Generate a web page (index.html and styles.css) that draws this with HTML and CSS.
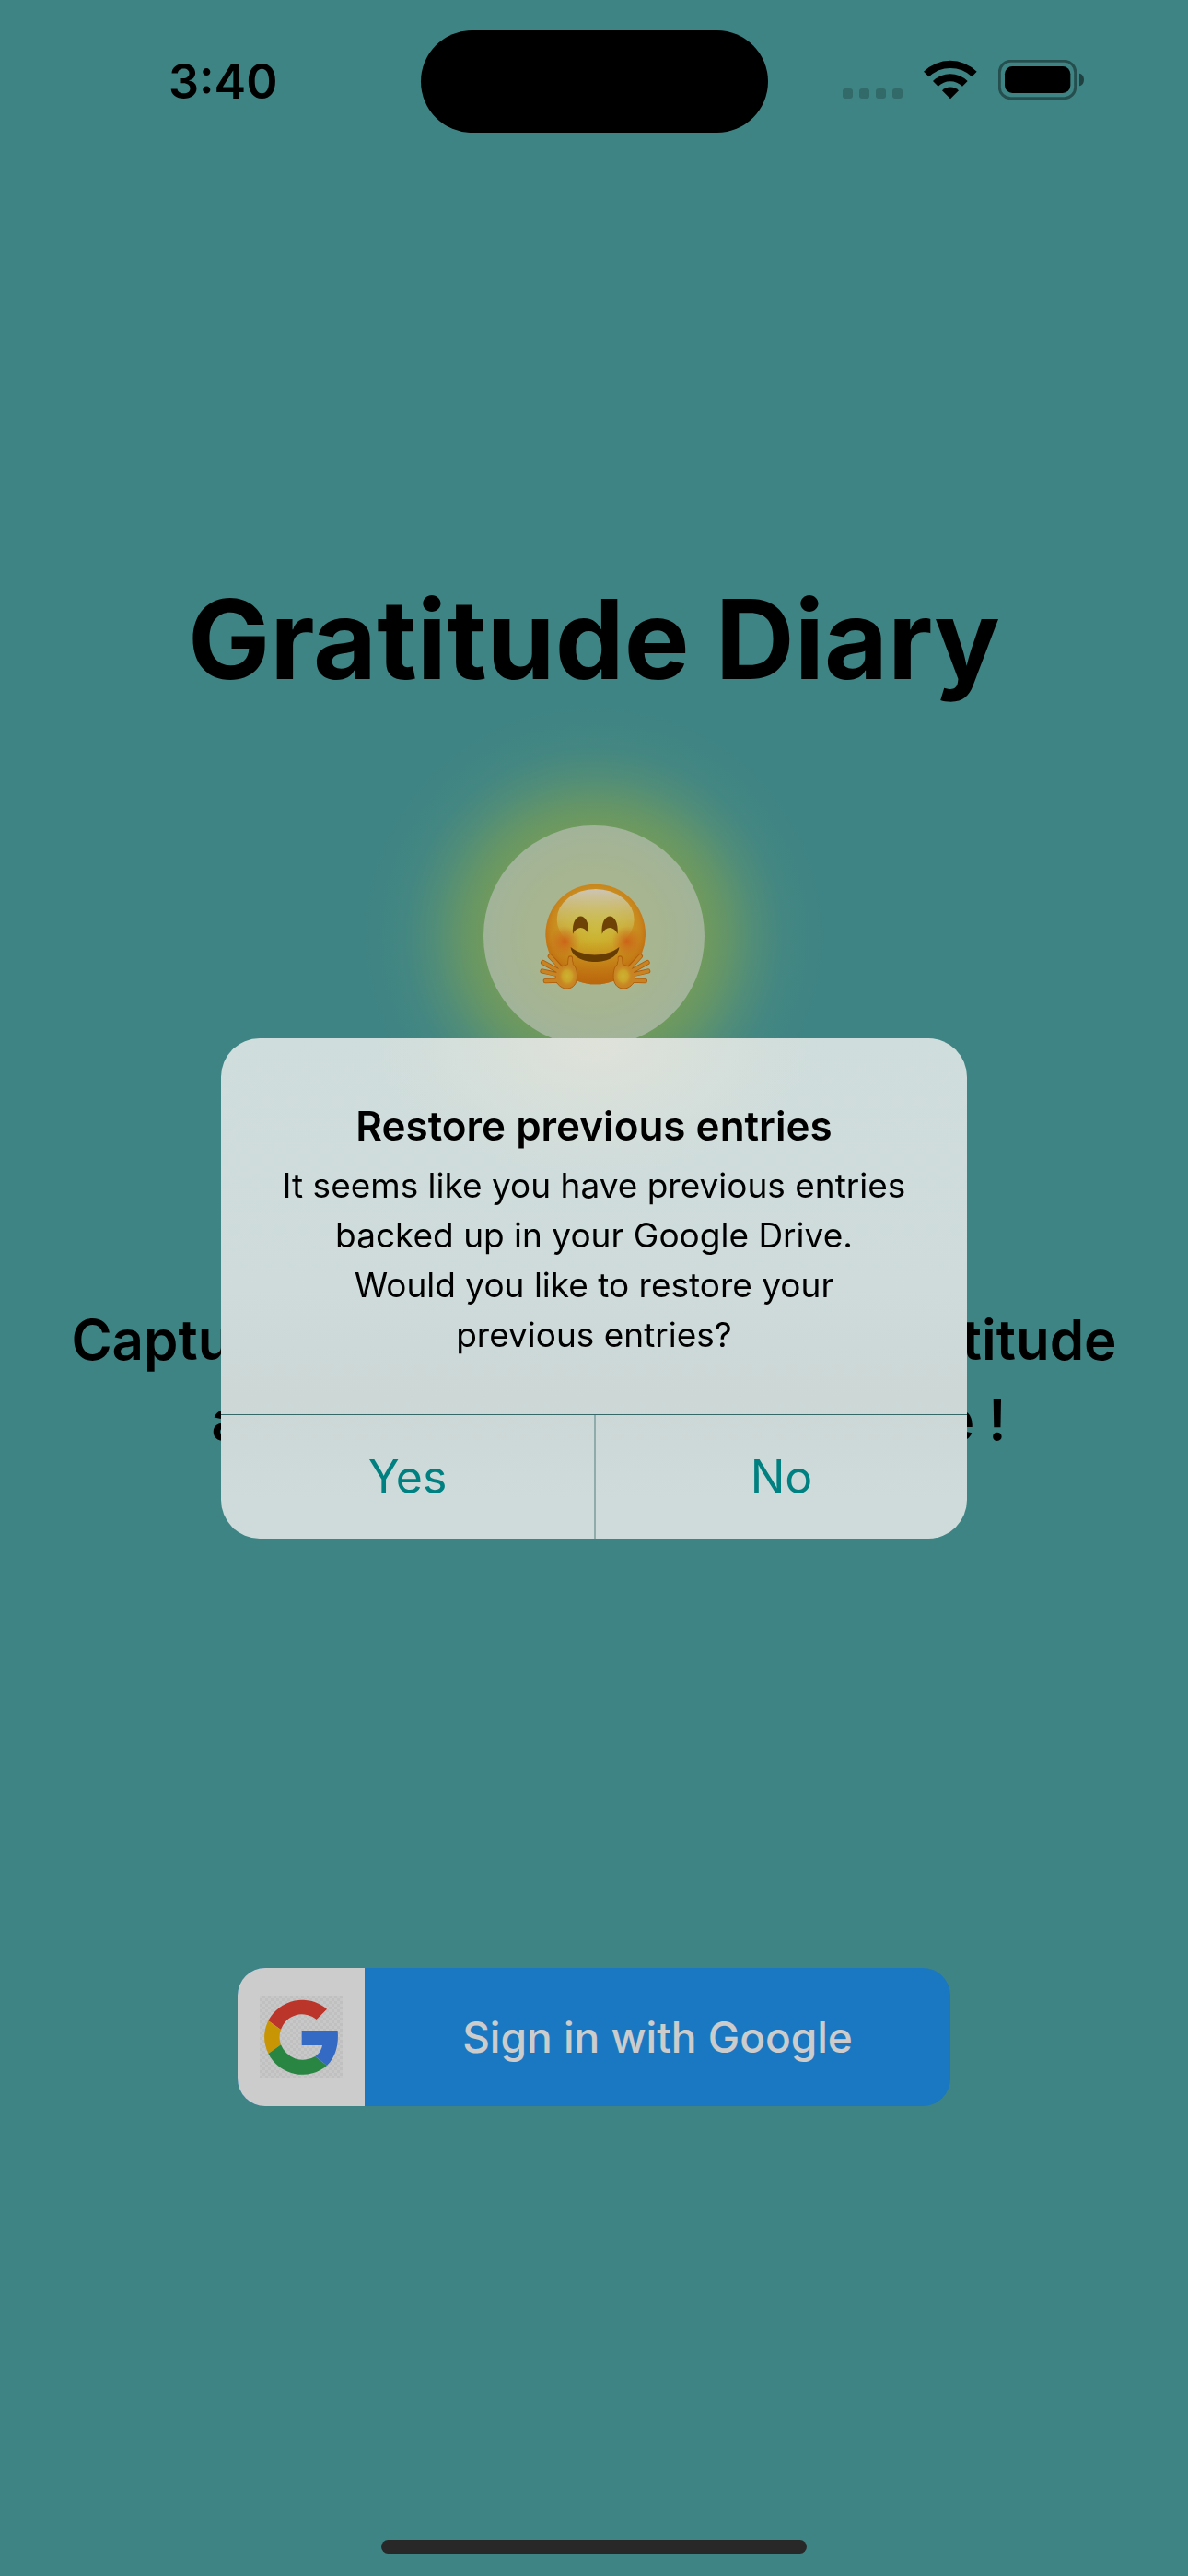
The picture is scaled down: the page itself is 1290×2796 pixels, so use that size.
FILE: index.html
```html
<!DOCTYPE html>
<html lang="en">
<head>
<meta charset="utf-8">
<meta name="viewport" content="width=device-width, initial-scale=1">
<title>Gratitude Diary</title>
<link rel="stylesheet" href="styles.css">
</head>
<body>
<div class="screen">
  <header class="status">
    <time class="status-time">3:40</time>
    <div class="island"></div>
    <div class="status-icons">
      <svg class="signal" width="65" height="11" viewBox="0 0 65 11" aria-label="No signal" fill="#000" fill-opacity=".2">
        <rect width="11" height="11" rx="3"/><rect x="18" width="11" height="11" rx="3"/><rect x="36" width="11" height="11" rx="3"/><rect x="54" width="11" height="11" rx="3"/>
      </svg>
      <svg width="58" height="43" viewBox="371 75 174 129" aria-label="Wi-Fi">
        <path d="M371 113A123 123 0 0 1 544 113L528 130A101 101 0 0 0 388 130Z"/>
        <path d="M401 144A80 80 0 0 1 514 144L497 161A56 56 0 0 0 418 161Z"/>
        <path d="M431 175A38 38 0 0 1 485 175L458 202Z"/>
      </svg>
      <svg width="93" height="43" viewBox="612 75 279 129" aria-label="Battery full">
        <rect x="616" y="79" width="247" height="121" rx="36" fill="none" stroke="#000" stroke-opacity=".4" stroke-width="9"/>
        <rect x="633" y="96" width="214" height="87" rx="25"/>
        <path d="M876 119C896 122 896 157 876 160Z" fill-opacity=".5"/>
      </svg>
    </div>
  </header>

  <main class="welcome">
    <h1 class="title">Gratitude Diary</h1>
    <div class="badge">
      <svg class="hug" viewBox="105 78 360 360" role="img" aria-label="Hugging face">
        <defs>
          <radialGradient id="face" cx=".5" cy=".45" r=".56">
            <stop offset="0" stop-color="#ffe63c"/><stop offset=".45" stop-color="#ffcf30"/>
            <stop offset=".8" stop-color="#fba824"/><stop offset="1" stop-color="#ef7c10"/>
          </radialGradient>
          <linearGradient id="low" x1="0" y1="0" x2="0" y2="1">
            <stop offset=".55" stop-color="#f49a18" stop-opacity="0"/><stop offset="1" stop-color="#ea8210"/>
          </linearGradient>
          <linearGradient id="shine" x1="0" y1="0" x2="0" y2="1">
            <stop offset="0" stop-color="#fff6e4"/><stop offset=".5" stop-color="#fff27a" stop-opacity=".7"/><stop offset="1" stop-color="#ffe23a" stop-opacity="0"/>
          </linearGradient>
          <radialGradient id="blush">
            <stop offset="0" stop-color="#ff6c1c" stop-opacity=".8"/><stop offset="1" stop-color="#ff7c20" stop-opacity="0"/>
          </radialGradient>
          <radialGradient id="palm">
            <stop offset="0" stop-color="#ffe03e"/><stop offset=".5" stop-color="#ffcc34"/><stop offset="1" stop-color="#fba42c" stop-opacity="0"/>
          </radialGradient>
          <g id="hand">
            <path d="M142 324L178 362M119 344L172 373M117 372L172 384M127 404L172 402M208 330L204 374" fill="none" stroke="#dd760c" stroke-width="16" stroke-linecap="round"/>
            <path d="M200 350C205 330 218 335 217 350C229 361 231 380 229 398C226 420 211 430 194 429C177 428 166 414 158 402L163 368L178 358Z" fill="#fba42c" stroke="#d97810" stroke-width="3"/>
            <path d="M142 324L182 369M119 344L177 376M117 372L177 387M127 404L177 402M208 331L204 378" fill="none" stroke="#fba42c" stroke-width="11" stroke-linecap="round"/>
            <ellipse cx="198" cy="388" rx="32" ry="38" fill="url(#palm)"/>
          </g>
        </defs>
        <circle cx="290" cy="252" r="163" fill="url(#face)"/>
        <circle cx="290" cy="252" r="163" fill="url(#low)"/>
        <ellipse cx="290" cy="204" rx="126" ry="99" fill="url(#shine)"/>
        <circle cx="190" cy="275" r="50" fill="url(#blush)"/>
        <circle cx="392" cy="275" r="50" fill="url(#blush)"/>
        <path id="eye" d="M216 251C210 174 273 174 267 251C255 224 228 224 216 251Z" fill="#8a5208"/>
        <use href="#eye" x="95"/>
        <path d="M209 294C250 328 325 328 367 294C362 358 215 358 209 294Z" fill="#804c04"/>
        <use href="#hand"/>
        <use href="#hand" transform="matrix(-1 0 0 1 578 0)"/>
      </svg>
    </div>
    <div class="tagline">
      <p class="tagline-row"><span>Captu</span><span>titude</span></p>
      <p class="tagline-row tagline-row-short"><span>a</span><span>e !</span></p>
    </div>
    <button class="google" type="button">
      <span class="google-mark">
        <svg class="google-logo" viewBox="96 108 270 270" aria-hidden="true">
          <path d="M124 190A124 124 0 0 1 315 152L281 186A73 73 0 0 0 165 219Z" fill="#ea4335"/>
          <path d="M124 190A124 124 0 0 0 124 297L165 268A73 73 0 0 1 165 219Z" fill="#fbbc05"/>
          <path d="M124 297A124 124 0 0 0 315 336L277 306A77 77 0 0 1 165 268Z" fill="#34a853"/>
          <path d="M233 222H350C354 265 345 307 315 336L277 306Q297 292 300 270H233Z" fill="#4285f4"/>
        </svg>
      </span>
      <span class="google-label">Sign in with Google</span>
    </button>
  </main>
  <div class="home-bar"></div>
</div>

<div class="scrim">
  <section class="alert" role="alertdialog" aria-modal="true" aria-labelledby="alert-title" aria-describedby="alert-text">
    <div class="alert-body">
      <h2 class="alert-title" id="alert-title">Restore previous entries</h2>
      <p class="alert-text" id="alert-text">It seems like you have previous entries<br>backed up in your Google Drive.<br>Would you like to restore your<br>previous entries?</p>
    </div>
    <div class="alert-actions">
      <button class="alert-button" type="button">Yes</button>
      <button class="alert-button" type="button">No</button>
    </div>
  </section>
</div>
</body>
</html>
```
FILE: styles.css
```css
* { box-sizing: border-box; }

body {
  margin: 0;
  background: #4fa6a5;
  color: #000;
  font-family: Inter, "Liberation Sans", sans-serif;
}

h1, h2, p { margin: 0; }

button {
  border: 0;
  padding: 0;
  font-family: inherit;
  cursor: pointer;
}

.screen {
  min-height: 100vh;
  display: flex;
  flex-direction: column;
  padding: 33px 0 24px;
}

/* Status bar */
.status {
  display: grid;
  grid-template-columns: 1fr auto 1fr;
  align-items: center;
  justify-items: center;
  padding: 0 28px;
}

.status-time {
  font-size: 52px;
  line-height: 64px;
  font-weight: 600;
}

.island {
  width: 377px;
  height: 111px;
  border-radius: 56px;
  background: #000;
}

.status-icons {
  display: flex;
  align-items: flex-end;
  gap: 23px;
  padding: 0 4px 4px 0;
}

.signal { margin-bottom: 1px; }

/* Welcome page */
.welcome {
  flex: 1;
  display: flex;
  flex-direction: column;
  align-items: center;
  padding-top: 480px;
}

.title {
  font-size: 119px;
  line-height: 140px;
  font-weight: 700;
}

.badge {
  position: relative;
  z-index: 0;
  width: 240px;
  height: 240px;
  margin-top: 132px;
  display: grid;
  place-items: center;
}

/* Warm glow round the badge */
.badge::before {
  content: "";
  position: absolute;
  z-index: -2;
  inset: -130px;
  border-radius: 50%;
  background: radial-gradient(closest-side, #8bc176 48%, #7ebb82 57%, #66b196 69%, #55a9a3 82%, #4fa6a5);
}

.badge::after {
  content: "";
  position: absolute;
  z-index: -1;
  inset: 0;
  border-radius: 50%;
  background: radial-gradient(closest-side, #d1e3b4 60%, #cae0c0);
}

.hug {
  width: 120px;
  height: 120px;
  overflow: visible;
}

.tagline {
  width: 88%;
  margin-top: 275px;
  font-size: 60px;
  line-height: 87px;
  font-weight: 600;
}

.tagline-row {
  display: flex;
  justify-content: space-between;
}

.tagline-row-short { padding: 0 120px 0 152px; }

.google {
  display: flex;
  width: 60%;
  height: 150px;
  margin-top: 551px;
  border-radius: 30px;
  overflow: hidden;
  background: #2196f3;
  color: #fff;
  font-size: 46px;
  font-weight: 500;
}

.google-mark {
  width: 138px;
  display: grid;
  place-items: center;
  align-self: stretch;
  background: #fff;
}

.google-logo {
  width: 90px;
  height: 90px;
  background: repeating-conic-gradient(#f0f0f0 0 25%, #fafafa 0 50%) 0 0 / 6px 6px;
}

.google-label {
  flex: 1;
  align-self: center;
}

.home-bar {
  width: 462px;
  height: 15px;
  align-self: center;
  border-radius: 8px;
  background: #323232;
}

/* Alert */
.scrim {
  position: fixed;
  z-index: 1;
  inset: 0;
  display: grid;
  place-items: center;
  background: rgba(0, 0, 0, .2);
}

.alert {
  width: 810px;
  max-width: 90%;
  border-radius: 42px;
  overflow: hidden;
  background:
    radial-gradient(240px 150px at 50% 0, #dfe2d9, #dfe2d900),
    linear-gradient(#cfdddc, #cedbda 50%, #ccd7d6 72%, #cedbda 92%);
  text-align: center;
}

.alert-body { padding: 63px 48px 59px; }

.alert-title {
  font-size: 44px;
  line-height: 64px;
  font-weight: 600;
}

.alert-text {
  padding-top: 6px;
  font-size: 37px;
  line-height: 54px;
}

.alert-actions {
  display: grid;
  grid-template-columns: 1fr 1fr;
  border-top: 1px solid #366868;
}

.alert-button {
  height: 134px;
  background: none;
  color: #008080;
  font-size: 50px;
}

.alert-button + .alert-button { border-left: 2px solid #8fabaa; }
```
